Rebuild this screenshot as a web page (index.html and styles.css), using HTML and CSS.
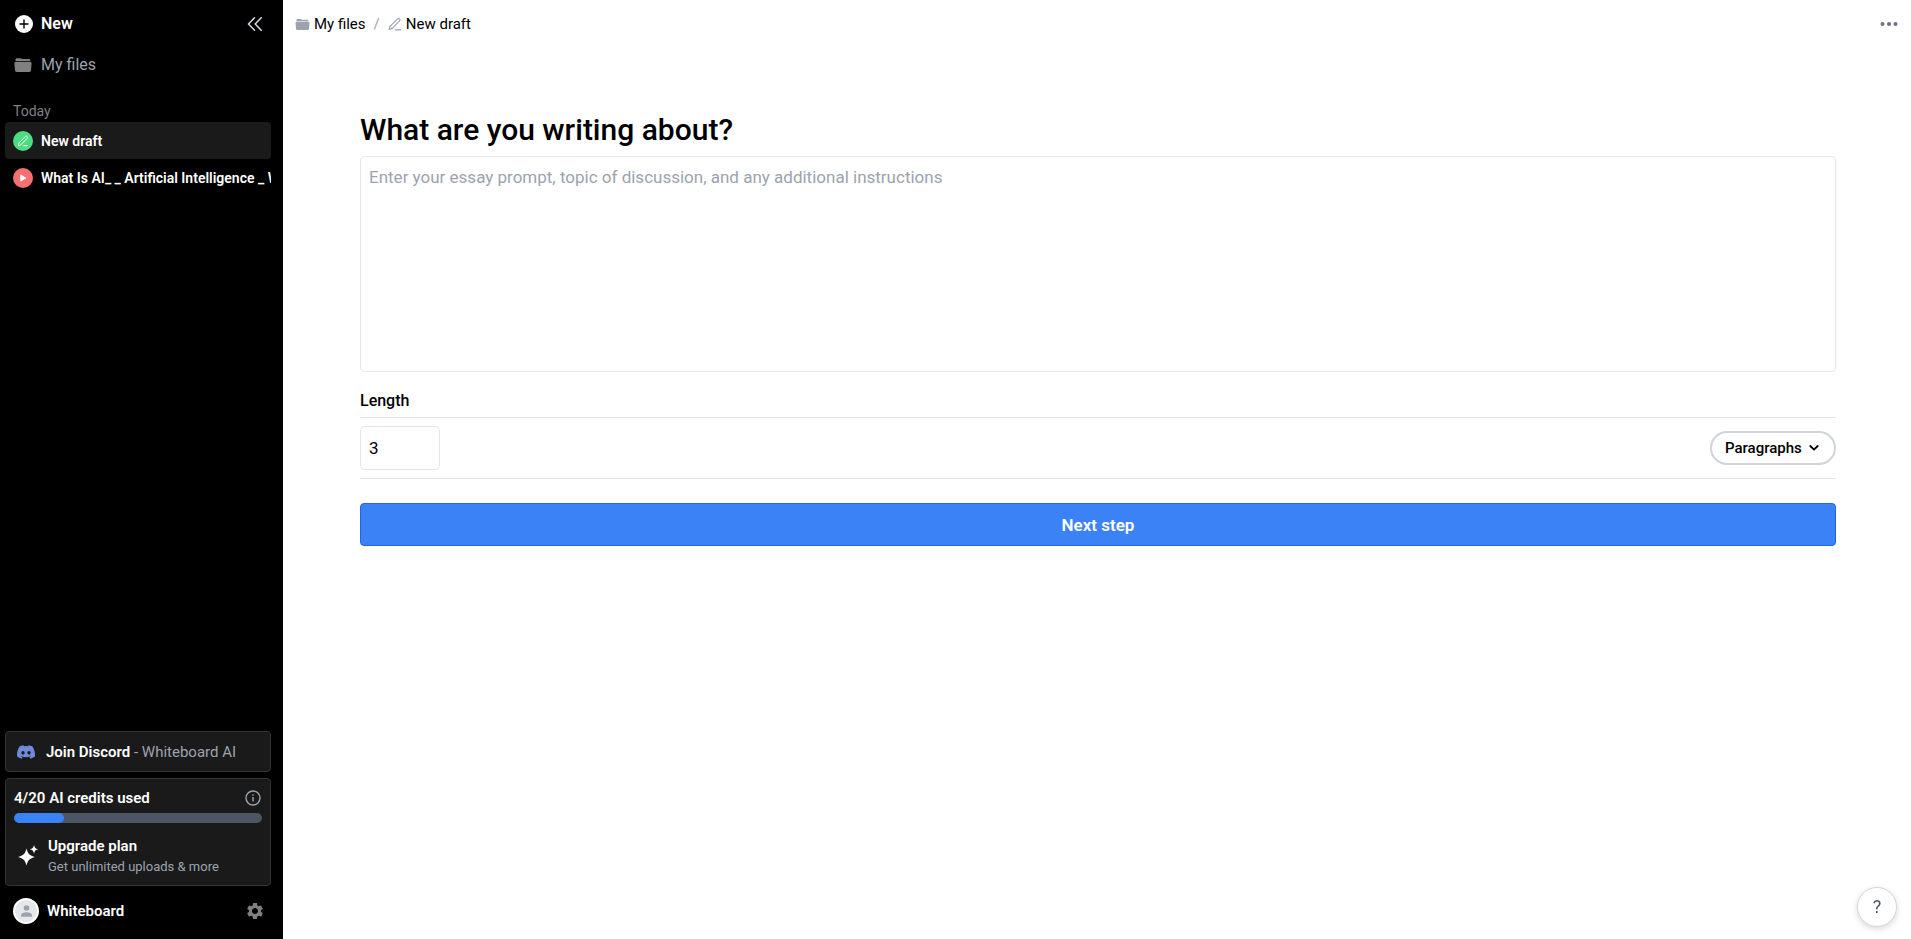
FILE: index.html
```html
<!DOCTYPE html>
<html lang="en">
<head>
    <meta charset="UTF-8">
    <meta name="viewport" content="width=device-width, initial-scale=1.0">
    <title>New draft - Whiteboard</title>
    <link rel="stylesheet" href="styles.css">
</head>
<body>
    <aside class="sidebar">
        <div class="sidebar-top">
            <button class="new-button" type="button">
                <svg width="18" height="18" viewBox="0 0 18 18">
                    <circle cx="9" cy="9" r="9" fill="#fff"/>
                    <path d="M9 5v8M5 9h8" stroke="#000" stroke-width="1.4" stroke-linecap="round"/>
                </svg>
                New
            </button>
            <button class="icon-button" type="button" aria-label="Collapse sidebar">
                <svg width="16" height="16" viewBox="0 0 16 16" fill="none" stroke="#d1d5db" stroke-width="1.6" stroke-linecap="round" stroke-linejoin="round">
                    <path d="M7.5 1.8 1.5 8l6 6.2M14.2 1.8 8.2 8l6 6.2"/>
                </svg>
            </button>
        </div>

        <a class="files-link" href="#">
            <svg width="18" height="16" viewBox="0 0 18 16" fill="#808080">
                <path d="M1.500 4V2.600C1.500 1.800 2.100 1.200 2.900 1.200h3.700c.5 0 .9.200 1.200.500l.3.300h6.700c.9 0 1.500.6 1.600 1.400V4z"/>
                <path d="M2 4.700h14c1 0 1.700.8 1.600 1.700l-.6 6.800c-.1 1-.8 1.700-1.800 1.700H2.800c-1 0-1.700-.7-1.800-1.700L.4 6.400C.3 5.500 1 4.700 2 4.700z"/>
            </svg>
            My files
        </a>

        <h2 class="group-title">Today</h2>
        <nav class="file-list">
            <a class="file active" href="#">
                <svg width="20" height="20" viewBox="0 0 20 20">
                    <circle cx="10" cy="10" r="10" fill="#4ade80"/>
                    <path d="M5.300 14.500l.7-2.700 6.300-6.200c.5-.5 1.300-.5 1.800 0s.5 1.300 0 1.800L7.900 13.700zM10.700 14.700h4" fill="none" stroke="#fff" stroke-width="1" stroke-linecap="round" stroke-linejoin="round"/>
                </svg>
                <span>New draft</span>
            </a>
            <a class="file" href="#">
                <svg width="20" height="20" viewBox="0 0 20 20">
                    <circle cx="10" cy="10" r="10" fill="#f87171"/>
                    <path d="M7.300 7.200v5.600c0 .5.400.7.800.5l4.700-2.800c.4-.2.400-.8 0-1L8.100 6.700c-.4-.2-.8 0-.8.500z" fill="#fff"/>
                </svg>
                <span>What Is AI_ _ Artificial Intelligence _ W</span>
            </a>
        </nav>

        <div class="sidebar-bottom">
            <a class="box discord" href="#">
                <svg width="18" height="14" viewBox="0 0 127 96" fill="#7289da">
                    <path d="M107.700 8.100A105 105 0 0 0 81.500 0a72 72 0 0 0-3.400 6.800 97.700 97.700 0 0 0-29.100 0A72 72 0 0 0 45.600 0a106 106 0 0 0-26.200 8.100C2.800 32.600-1.700 56.600.500 80.200a105.700 105.700 0 0 0 32.200 16.200 77.700 77.700 0 0 0 6.900-11.200 68 68 0 0 1-10.900-5.200c.9-.7 1.800-1.400 2.700-2.100a75.600 75.600 0 0 0 64.300 0c.9.700 1.800 1.400 2.700 2.100a68 68 0 0 1-10.900 5.200 77 77 0 0 0 6.900 11.200 105.300 105.300 0 0 0 32.200-16.200c2.600-27.400-4.500-51.100-18.900-72.100zM42.500 65.700c-6.300 0-11.500-5.700-11.500-12.700s5-12.700 11.400-12.700S54 46 53.900 53s-5 12.700-11.400 12.700zm42.200 0c-6.300 0-11.400-5.700-11.400-12.700s5-12.700 11.400-12.700S96.200 46 96.100 53s-5 12.700-11.400 12.700z"/>
                </svg>
                <span><strong>Join Discord</strong> - Whiteboard AI</span>
            </a>

            <div class="box credits">
                <div class="credits-head">
                    <span id="creditsLabel">4/20 AI credits used</span>
                    <svg width="16" height="16" viewBox="0 0 16 16" fill="none" stroke="#9ca3af" stroke-width="1.4">
                        <circle cx="8" cy="8" r="7"/>
                        <path d="M8 7v4.500M8 4.300v1.500"/>
                    </svg>
                </div>
                <div class="progress" role="progressbar" aria-labelledby="creditsLabel" aria-valuenow="4" aria-valuemin="0" aria-valuemax="20">
                    <div class="progress-fill" style="width: 20%"></div>
                </div>
                <a class="upgrade" href="#">
                    <svg width="22" height="22" viewBox="0 0 22 22" fill="#fff">
                        <path d="M9.500 3.500c1.300 5.200 3.200 7.200 8.500 8.500-5.300 1.300-7.200 3.300-8.500 8.500C8.200 15.300 6.300 13.300 1 12c5.300-1.300 7.200-3.300 8.500-8.500z"/>
                        <path d="M17 0c.6 2.700 1.600 3.700 4.200 4.300-2.600.6-3.600 1.600-4.200 4.300-.6-2.700-1.600-3.700-4.200-4.300C15.400 3.700 16.400 2.700 17 0z"/>
                    </svg>
                    <span class="upgrade-text">
                        <strong>Upgrade plan</strong>
                        <small>Get unlimited uploads &amp; more</small>
                    </span>
                </a>
            </div>

            <div class="user">
                <svg width="26" height="26" viewBox="0 0 26 26">
                    <circle cx="13" cy="13" r="12" fill="#e5e7eb" stroke="#fff" stroke-width="2"/>
                    <circle cx="13.500" cy="10" r="2.800" fill="#9ca3af"/>
                    <path d="M8 18.700v-1.200c0-2 3-3.200 5.500-3.200s5.500 1.200 5.500 3.200v1.200z" fill="#9ca3af"/>
                </svg>
                <span class="user-name">Whiteboard</span>
                <button class="icon-button" type="button" aria-label="Settings">
                    <svg width="20" height="20" viewBox="0 0 24 24" fill="#808080">
                        <path d="M19.140 12.940c.04-.3.060-.61.060-.94 0-.32-.02-.64-.07-.94l2.030-1.580c.18-.14.23-.41.120-.61l-1.920-3.320c-.12-.22-.37-.29-.59-.22l-2.390.96c-.5-.38-1.030-.7-1.620-.94l-.36-2.540c-.04-.24-.24-.41-.48-.41h-3.840c-.24 0-.43.170-.47.410l-.36 2.540c-.59.240-1.130.570-1.620.940l-2.390-.96c-.22-.08-.47 0-.59.220L2.740 8.870c-.12.210-.08.470.120.610l2.030 1.580c-.05.300-.09.630-.09.940s.02.640.070.940l-2.030 1.580c-.18.140-.23.410-.12.610l1.920 3.320c.12.220.37.290.59.220l2.390-.96c.5.380 1.030.7 1.620.940l.36 2.540c.05.240.24.410.48.410h3.840c.24 0 .44-.17.470-.41l.36-2.540c.59-.24 1.130-.56 1.620-.94l2.390.96c.22.080.47 0 .59-.22l1.920-3.320c.12-.22.070-.47-.12-.61l-2.010-1.580zM12 15.600c-1.980 0-3.600-1.620-3.600-3.600s1.620-3.600 3.600-3.600 3.600 1.620 3.600 3.600-1.620 3.600-3.600 3.600z"/>
                    </svg>
                </button>
            </div>
        </div>
    </aside>

    <main class="main">
        <header class="topbar">
            <nav class="breadcrumb" aria-label="Breadcrumb">
                <a href="#">
                    <svg width="15" height="13" viewBox="0 0 18 16" fill="#9ca3af">
                        <path d="M1.500 4V2.600C1.500 1.800 2.100 1.200 2.900 1.200h3.700c.5 0 .9.200 1.200.500l.3.300h6.700c.9 0 1.500.6 1.600 1.400V4z"/>
                        <path d="M2 4.700h14c1 0 1.700.8 1.600 1.700l-.6 6.800c-.1 1-.8 1.700-1.800 1.700H2.800c-1 0-1.700-.7-1.800-1.700L.4 6.400C.3 5.500 1 4.700 2 4.700z"/>
                    </svg>
                    My files
                </a>
                <span class="slash">/</span>
                <a href="#">
                    <svg width="14" height="14" viewBox="0 0 14 14" fill="none" stroke="#9ca3af" stroke-width="1.200" stroke-linecap="round" stroke-linejoin="round">
                        <path d="M1.200 12.400l.8-3.100L9.500 1.800c.6-.6 1.500-.6 2.100 0s.6 1.500 0 2.100L4.200 11.400zM7.500 12.800h5.300"/>
                    </svg>
                    New draft
                </a>
            </nav>
            <button class="icon-button" type="button" aria-label="More options">
                <svg width="18" height="4" viewBox="0 0 18 4" fill="#6b7280">
                    <circle cx="2.500" cy="2" r="2"/>
                    <circle cx="9" cy="2" r="2"/>
                    <circle cx="15.500" cy="2" r="2"/>
                </svg>
            </button>
        </header>

        <form class="draft-form">
            <h1><label for="prompt">What are you writing about?</label></h1>
            <textarea id="prompt" placeholder="Enter your essay prompt, topic of discussion, and any additional instructions"></textarea>

            <label class="length-label" for="length">Length</label>
            <div class="length-row">
                <input type="text" id="length" inputmode="numeric" value="3">
                <div class="unit">
                    <select id="unit" aria-label="Length unit">
                        <option>Paragraphs</option>
                        <option>Words</option>
                        <option>Pages</option>
                    </select>
                    <svg width="10" height="8" viewBox="0 0 10 8" fill="none" stroke="#000" stroke-width="1.800" stroke-linecap="round" stroke-linejoin="round">
                        <path d="M1.300 2 5 5.700 8.700 2"/>
                    </svg>
                </div>
            </div>

            <button class="next-button" type="button">Next step</button>
        </form>
    </main>

    <button class="help-button" type="button" aria-label="Help">?</button>
</body>
</html>
```

FILE: styles.css
```css
* {
    box-sizing: border-box;
}
body {
    margin: 0;
    min-height: 100vh;
    display: flex;
    font-family: Roboto, sans-serif;
    font-size: 16px;
    line-height: 24px;
    color: #000;
    background-color: #fff;
}
a {
    color: inherit;
    text-decoration: none;
}
button, input, select, textarea {
    font: inherit;
    color: inherit;
}
button {
    padding: 0;
    border: none;
    background: none;
    cursor: pointer;
}
svg {
    display: block;
    flex-shrink: 0;
}
strong {
    font-weight: 600;
}

/* Sidebar */
.sidebar {
    width: 283px;
    flex-shrink: 0;
    display: flex;
    flex-direction: column;
    padding: 12px 12px 15px 5px;
    background-color: #000;
    color: #fff;
}
.sidebar-top {
    display: flex;
    justify-content: space-between;
    padding: 0 8px 0 10px;
}
.new-button {
    display: flex;
    align-items: center;
    gap: 8px;
    font-weight: 600;
}
.icon-button {
    display: flex;
    align-items: center;
}
.files-link {
    display: flex;
    align-items: center;
    gap: 9px;
    margin-top: 17px;
    padding-left: 9px;
    color: #9ca3af;
}
.group-title {
    margin: 23px 0 0;
    padding-left: 8px;
    font-size: 14px;
    font-weight: 400;
    line-height: 22px;
    color: #808080;
}
.file {
    display: flex;
    align-items: center;
    gap: 8px;
    height: 37px;
    padding-left: 8px;
    border-radius: 4px;
    font-size: 14px;
    font-weight: 600;
    white-space: nowrap;
    overflow: hidden;
}
.file.active {
    background-color: #1a1a1a;
}
.sidebar-bottom {
    margin-top: auto;
}
.box {
    border: 1px solid #333;
    border-radius: 4px;
    background-color: #1a1a1a;
}
.discord {
    display: flex;
    align-items: center;
    gap: 11px;
    height: 41px;
    padding-left: 11px;
    font-size: 15px;
    color: #9ca3af;
}
.discord strong {
    color: #fff;
}
.credits {
    margin-top: 6px;
    padding: 8px;
}
.credits-head {
    display: flex;
    align-items: center;
    justify-content: space-between;
    height: 22px;
    padding-right: 1px;
    font-size: 15px;
    font-weight: 600;
}
.progress {
    height: 10px;
    margin-top: 4px;
    border-radius: 5px;
    background-color: #4b5563;
    overflow: hidden;
}
.progress-fill {
    height: 100%;
    border-radius: 5px;
    background-color: #3b82f6;
}
.upgrade {
    display: flex;
    align-items: center;
    gap: 9px;
    margin-top: 12px;
    padding-left: 3px;
}
.upgrade-text {
    display: flex;
    flex-direction: column;
    font-size: 15px;
    line-height: 22px;
}
.upgrade-text small {
    font-size: 13px;
    line-height: 20px;
    color: #9ca3af;
}
.user {
    display: flex;
    align-items: center;
    gap: 8px;
    margin-top: 12px;
    padding: 0 6px 0 8px;
}
.user-name {
    flex: 1;
    font-size: 15px;
    font-weight: 600;
}

/* Main area */
.main {
    flex: 1;
    min-width: 0;
}
.topbar {
    display: flex;
    justify-content: space-between;
    padding: 12px 13px 12px 12px;
}
.breadcrumb {
    display: flex;
    gap: 8px;
    font-size: 15px;
}
.breadcrumb a {
    display: flex;
    align-items: center;
    gap: 4px;
}
.slash {
    color: #9ca3af;
}
.draft-form {
    display: flex;
    flex-direction: column;
    padding: 63px 75px 24px 77px;
}
h1 {
    margin: 0 0 7px;
    font-size: 30px;
    font-weight: 500;
    line-height: 38px;
}
textarea, input {
    padding: 8px;
    border: 1px solid #e5e7eb;
    border-radius: 4px;
    background-color: #fff;
}
textarea {
    height: 216px;
    resize: none;
    font-size: 17px;
}
textarea::placeholder {
    color: #9ca3af;
}
.length-label {
    margin: 17px 0 4px;
    font-weight: 500;
}
.length-row {
    display: flex;
    align-items: center;
    justify-content: space-between;
    padding: 8px 0;
    border-top: 1px solid #e5e7eb;
    border-bottom: 1px solid #e5e7eb;
}
.length-row input {
    width: 80px;
    height: 44px;
    font-size: 17px;
}
.unit {
    display: grid;
    align-items: center;
}
.unit select, .unit svg {
    grid-area: 1 / 1;
}
.unit select {
    height: 34px;
    padding: 0 32px 0 13px;
    border: 2px solid #d1d5db;
    border-radius: 17px;
    background-color: #fff;
    appearance: none;
    font-size: 15px;
    font-weight: 500;
}
.unit svg {
    justify-self: end;
    margin-right: 17px;
    pointer-events: none;
}
.next-button {
    height: 43px;
    margin-top: 24px;
    border: 1px solid #2563eb;
    border-radius: 4px;
    background-color: #3b82f6;
    color: #fff;
    font-size: 17px;
    font-weight: 600;
}
.help-button {
    position: fixed;
    right: 14px;
    bottom: 12px;
    width: 40px;
    height: 40px;
    border: 1px solid #d1d5db;
    border-radius: 50%;
    background-color: #fff;
    box-shadow: 0 2px 6px rgba(0, 0, 0, 0.15);
    font-size: 18px;
    color: #4b5563;
}
```
